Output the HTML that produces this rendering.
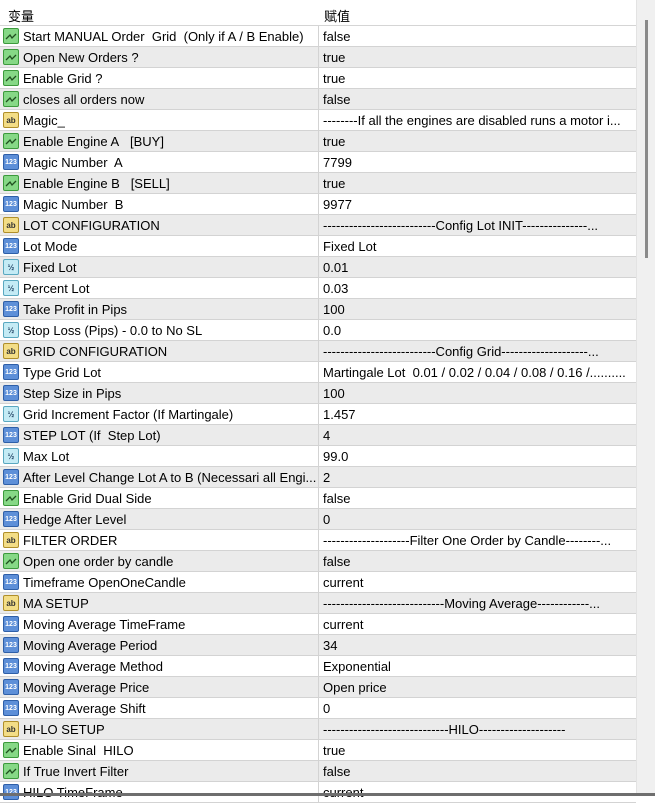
<!DOCTYPE html>
<html><head><meta charset="utf-8"><style>
*{margin:0;padding:0;box-sizing:border-box}
body{width:655px;height:796px;overflow:hidden;background:#fff;font-family:"Liberation Sans","Noto Sans CJK SC",sans-serif;font-size:13px;color:#000;position:relative}
.hdr{position:absolute;left:0;top:0;width:636px;height:26px;border-bottom:1px solid #d5d5d5;background:#fff}
.hdr span{position:absolute;top:6px}
.sb{position:absolute;left:636px;top:0;width:19px;height:796px;background:#f0f0f0;border-left:1px solid #e3e3e3}
.th{position:absolute;left:8px;top:20px;width:3px;height:238px;background:#8a8a8a}
.rows{position:absolute;left:0;top:26px;width:636px}
.r{height:21px;border-bottom:1px solid #d3d3d3;position:relative;white-space:nowrap;overflow:hidden}
.r:nth-child(even){background:#ebebeb}
.n{position:absolute;left:23px;top:3px;width:294px;overflow:hidden}
.v{position:absolute;left:318px;top:0;height:21px;border-left:1px solid #d3d3d3;padding-left:4px;padding-top:3px;width:318px;overflow:hidden}
.i{position:absolute;left:3px;top:2px;width:16px;height:16px;border-radius:2px;font-size:8px;text-align:center;line-height:15px;font-weight:bold}
.g{background:#86d886;border:1px solid #3c9a3c}
.a{background:#f3dd86;border:1px solid #b08f2a;color:#333}
.b{background:#5d8fd8;border:1px solid #2e5fa8;color:#fff;font-size:7px}
.d{background:#c4ebf5;border:1px solid #5aa8c0;color:#246;font-size:8px}
.bot{position:absolute;left:0;top:793px;width:655px;height:3px;background:#6e6e6e}
</style></head><body>
<div class="hdr"><span style="left:8px">变量</span><span style="left:324px">赋值</span></div>
<div class="rows">
<div class="r"><span class="i g"><svg width="14" height="14"><path d="M2 10 L6 6 L8 9 L12 5" stroke="#205020" fill="none" stroke-width="1.3"/></svg></span><span class="n">Start MANUAL Order&nbsp; Grid&nbsp; (Only if A / B Enable)</span><span class="v">false</span></div>
<div class="r"><span class="i g"><svg width="14" height="14"><path d="M2 10 L6 6 L8 9 L12 5" stroke="#205020" fill="none" stroke-width="1.3"/></svg></span><span class="n">Open New Orders ?</span><span class="v">true</span></div>
<div class="r"><span class="i g"><svg width="14" height="14"><path d="M2 10 L6 6 L8 9 L12 5" stroke="#205020" fill="none" stroke-width="1.3"/></svg></span><span class="n">Enable Grid ?</span><span class="v">true</span></div>
<div class="r"><span class="i g"><svg width="14" height="14"><path d="M2 10 L6 6 L8 9 L12 5" stroke="#205020" fill="none" stroke-width="1.3"/></svg></span><span class="n">closes all orders now</span><span class="v">false</span></div>
<div class="r"><span class="i a">ab</span><span class="n">Magic_</span><span class="v">--------If all the engines are disabled runs a motor i...</span></div>
<div class="r"><span class="i g"><svg width="14" height="14"><path d="M2 10 L6 6 L8 9 L12 5" stroke="#205020" fill="none" stroke-width="1.3"/></svg></span><span class="n">Enable Engine A&nbsp;&nbsp; [BUY]</span><span class="v">true</span></div>
<div class="r"><span class="i b">123</span><span class="n">Magic Number&nbsp; A</span><span class="v">7799</span></div>
<div class="r"><span class="i g"><svg width="14" height="14"><path d="M2 10 L6 6 L8 9 L12 5" stroke="#205020" fill="none" stroke-width="1.3"/></svg></span><span class="n">Enable Engine B&nbsp;&nbsp; [SELL]</span><span class="v">true</span></div>
<div class="r"><span class="i b">123</span><span class="n">Magic Number&nbsp; B</span><span class="v">9977</span></div>
<div class="r"><span class="i a">ab</span><span class="n">LOT CONFIGURATION</span><span class="v">--------------------------Config Lot INIT---------------...</span></div>
<div class="r"><span class="i b">123</span><span class="n">Lot Mode</span><span class="v">Fixed Lot</span></div>
<div class="r"><span class="i d">½</span><span class="n">Fixed Lot</span><span class="v">0.01</span></div>
<div class="r"><span class="i d">½</span><span class="n">Percent Lot</span><span class="v">0.03</span></div>
<div class="r"><span class="i b">123</span><span class="n">Take Profit in Pips</span><span class="v">100</span></div>
<div class="r"><span class="i d">½</span><span class="n">Stop Loss (Pips) - 0.0 to No SL</span><span class="v">0.0</span></div>
<div class="r"><span class="i a">ab</span><span class="n">GRID CONFIGURATION</span><span class="v">--------------------------Config Grid--------------------...</span></div>
<div class="r"><span class="i b">123</span><span class="n">Type Grid Lot</span><span class="v">Martingale Lot&nbsp; 0.01 / 0.02 / 0.04 / 0.08 / 0.16 /..........</span></div>
<div class="r"><span class="i b">123</span><span class="n">Step Size in Pips</span><span class="v">100</span></div>
<div class="r"><span class="i d">½</span><span class="n">Grid Increment Factor (If Martingale)</span><span class="v">1.457</span></div>
<div class="r"><span class="i b">123</span><span class="n">STEP LOT (If&nbsp; Step Lot)</span><span class="v">4</span></div>
<div class="r"><span class="i d">½</span><span class="n">Max Lot</span><span class="v">99.0</span></div>
<div class="r"><span class="i b">123</span><span class="n">After Level Change Lot A to B (Necessari all Engi...</span><span class="v">2</span></div>
<div class="r"><span class="i g"><svg width="14" height="14"><path d="M2 10 L6 6 L8 9 L12 5" stroke="#205020" fill="none" stroke-width="1.3"/></svg></span><span class="n">Enable Grid Dual Side</span><span class="v">false</span></div>
<div class="r"><span class="i b">123</span><span class="n">Hedge After Level</span><span class="v">0</span></div>
<div class="r"><span class="i a">ab</span><span class="n">FILTER ORDER</span><span class="v">--------------------Filter One Order by Candle--------...</span></div>
<div class="r"><span class="i g"><svg width="14" height="14"><path d="M2 10 L6 6 L8 9 L12 5" stroke="#205020" fill="none" stroke-width="1.3"/></svg></span><span class="n">Open one order by candle</span><span class="v">false</span></div>
<div class="r"><span class="i b">123</span><span class="n">Timeframe OpenOneCandle</span><span class="v">current</span></div>
<div class="r"><span class="i a">ab</span><span class="n">MA SETUP</span><span class="v">----------------------------Moving Average------------...</span></div>
<div class="r"><span class="i b">123</span><span class="n">Moving Average TimeFrame</span><span class="v">current</span></div>
<div class="r"><span class="i b">123</span><span class="n">Moving Average Period</span><span class="v">34</span></div>
<div class="r"><span class="i b">123</span><span class="n">Moving Average Method</span><span class="v">Exponential</span></div>
<div class="r"><span class="i b">123</span><span class="n">Moving Average Price</span><span class="v">Open price</span></div>
<div class="r"><span class="i b">123</span><span class="n">Moving Average Shift</span><span class="v">0</span></div>
<div class="r"><span class="i a">ab</span><span class="n">HI-LO SETUP</span><span class="v">-----------------------------HILO--------------------</span></div>
<div class="r"><span class="i g"><svg width="14" height="14"><path d="M2 10 L6 6 L8 9 L12 5" stroke="#205020" fill="none" stroke-width="1.3"/></svg></span><span class="n">Enable Sinal&nbsp; HILO</span><span class="v">true</span></div>
<div class="r"><span class="i g"><svg width="14" height="14"><path d="M2 10 L6 6 L8 9 L12 5" stroke="#205020" fill="none" stroke-width="1.3"/></svg></span><span class="n">If True Invert Filter</span><span class="v">false</span></div>
<div class="r"><span class="i b">123</span><span class="n">HILO TimeFrame</span><span class="v">current</span></div>
</div>
<div class="sb"><div class="th"></div></div>
<div class="bot"></div>
</body></html>
